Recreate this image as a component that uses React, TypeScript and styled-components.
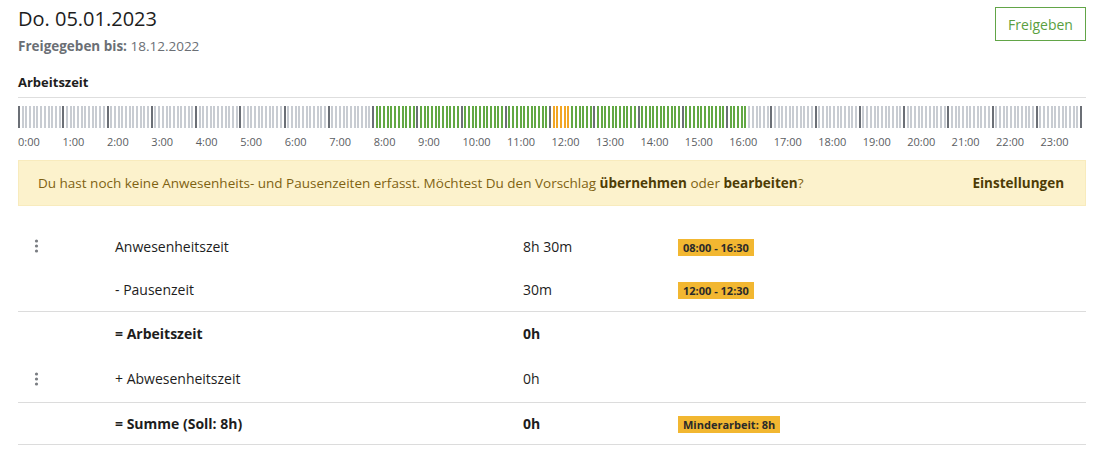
import React from "react";
import styled, { createGlobalStyle } from "styled-components";

const Global = createGlobalStyle`
  html, body { margin: 0; padding: 0; background: #ffffff; }
  body { font-family: "Open Sans", "Noto Sans", Arial, sans-serif; color: #1d1d1d; }
  * { box-sizing: border-box; }
`;

const Page = styled.div`
  width: 1105px;
  padding: 5px 19px 0 18px;
`;

const Header = styled.div`
  display: flex;
  justify-content: space-between;
  align-items: flex-start;
`;

const TitleBlock = styled.div`
  display: flex;
  flex-direction: column;
  gap: 4px;
`;

const Title = styled.h1`
  margin: 0;
  font-size: 20px;
  line-height: 27px;
  font-weight: 400;
  color: #1d1d1d;
`;

const Sub = styled.div`
  font-size: 13.5px;
  line-height: 20px;
  color: #6b6f75;
  b { font-weight: 700; }
`;

const ReleaseButton = styled.button`
  margin-top: 2px;
  width: 91px;
  height: 34px;
  border: 1px solid #62a548;
  background: #fff;
  color: #5a9f40;
  font-family: inherit;
  font-size: 14px;
  font-weight: 500;
  cursor: pointer;
`;

const SectionTitle = styled.div`
  margin-top: 17px;
  font-size: 13px;
  line-height: 18px;
  font-weight: 700;
  color: #1d1d1d;
  padding-bottom: 6px;
  border-bottom: 1px solid #dedede;
`;

const TickBar = styled.div`
  margin-top: 8px;
  margin-right: 1px;
  height: 22px;
  display: flex;
  justify-content: space-between;
`;

type TickKind = "light" | "dark" | "green" | "orange";
const tickColors: Record<TickKind, string> = {
  light: "#c8ccd2",
  dark: "#6b6f76",
  green: "#62a844",
  orange: "#f2a624",
};

const Tick = styled.span<{ $kind: TickKind }>`
  width: 2px;
  height: 100%;
  background: ${(p) => tickColors[p.$kind]};
`;

const HourLabels = styled.div`
  margin-top: 6px;
  width: 1067px;
  display: grid;
  grid-template-columns: repeat(24, 1fr);
`;

const HourLabel = styled.span`
  font-size: 11px;
  line-height: 16px;
  color: #5a5d62;
`;

const Banner = styled.div`
  margin-top: 10px;
  height: 46px;
  display: flex;
  align-items: center;
  justify-content: space-between;
  padding: 0 21px 0 19px;
  background: #fcf2cc;
  border: 1px solid #f8ebbd;
  font-size: 13.5px;
  color: #7f6212;
  b { font-weight: 700; color: #4e3c05; }
`;

const BannerAction = styled.span`
  font-weight: 700;
  color: #4e3c05;
`;

const Table = styled.div`
  margin-top: 18px;
  display: flex;
  flex-direction: column;
`;

const Row = styled.div<{ $h: number; $line?: boolean }>`
  display: grid;
  grid-template-columns: 97px 408px 155px 1fr;
  align-items: center;
  height: ${(p) => p.$h}px;
  border-bottom: ${(p) => (p.$line ? "1px solid #dcdcdc" : "none")};
  font-size: 14px;
  color: #1d1d1d;
`;

const Cell = styled.div<{ $bold?: boolean }>`
  font-weight: ${(p) => (p.$bold ? 700 : 400)};
  line-height: 19px;
`;

const MenuCell = styled.div`
  padding-left: 16px;
  display: flex;
  align-items: center;
`;

const Badge = styled.span`
  display: inline-block;
  background: #f2b731;
  color: #2a2a2a;
  font-size: 11px;
  font-weight: 700;
  line-height: 17px;
  padding: 0 5px;
`;

const Dots = () => (
  <svg width="5" height="14" viewBox="0 0 5 14" aria-hidden>
    <circle cx="2.5" cy="2" r="1.6" fill="#7a7d82" />
    <circle cx="2.5" cy="7" r="1.6" fill="#7a7d82" />
    <circle cx="2.5" cy="12" r="1.6" fill="#7a7d82" />
  </svg>
);

function kindOf(i: number): TickKind {
  if (i % 12 === 0) return "dark";
  if (i > 144 && i < 150) return "orange";
  if (i > 96 && i < 198) return "green";
  return "light";
}

const ticks = Array.from({ length: 289 }, (_, i) => kindOf(i));
const hours = Array.from({ length: 24 }, (_, i) => `${i}:00`);

type RowData = {
  menu?: boolean;
  label: string;
  value: string;
  badge?: string;
  bold?: boolean;
  h: number;
  line?: boolean;
};

const rows: RowData[] = [
  { menu: true, label: "Anwesenheitszeit", value: "8h 30m", badge: "08:00 - 16:30", h: 44 },
  { label: "- Pausenzeit", value: "30m", badge: "12:00 - 12:30", h: 44, line: true },
  { label: "= Arbeitszeit", value: "0h", bold: true, h: 43 },
  { menu: true, label: "+ Abwesenheitszeit", value: "0h", h: 48, line: true },
  { label: "= Summe (Soll: 8h)", value: "0h", bold: true, badge: "Minderarbeit: 8h", h: 42, line: true },
];

export default function App() {
  return (
    <>
      <Global />
      <Page>
        <Header>
          <TitleBlock>
            <Title>Do. 05.01.2023</Title>
            <Sub>
              <b>Freigegeben bis:</b> 18.12.2022
            </Sub>
          </TitleBlock>
          <ReleaseButton>Freigeben</ReleaseButton>
        </Header>
        <SectionTitle>Arbeitszeit</SectionTitle>
        <TickBar>
          {ticks.map((k, i) => (
            <Tick key={i} $kind={k} />
          ))}
        </TickBar>
        <HourLabels>
          {hours.map((h) => (
            <HourLabel key={h}>{h}</HourLabel>
          ))}
        </HourLabels>
        <Banner>
          <span>
            Du hast noch keine Anwesenheits- und Pausenzeiten erfasst. Möchtest Du den Vorschlag{" "}
            <b>übernehmen</b> oder <b>bearbeiten</b>?
          </span>
          <BannerAction>Einstellungen</BannerAction>
        </Banner>
        <Table>
          {rows.map((r) => (
            <Row key={r.label} $h={r.h} $line={r.line}>
              <MenuCell>{r.menu && <Dots />}</MenuCell>
              <Cell $bold={r.bold}>{r.label}</Cell>
              <Cell $bold={r.bold}>{r.value}</Cell>
              <Cell>{r.badge && <Badge>{r.badge}</Badge>}</Cell>
            </Row>
          ))}
        </Table>
      </Page>
    </>
  );
}
